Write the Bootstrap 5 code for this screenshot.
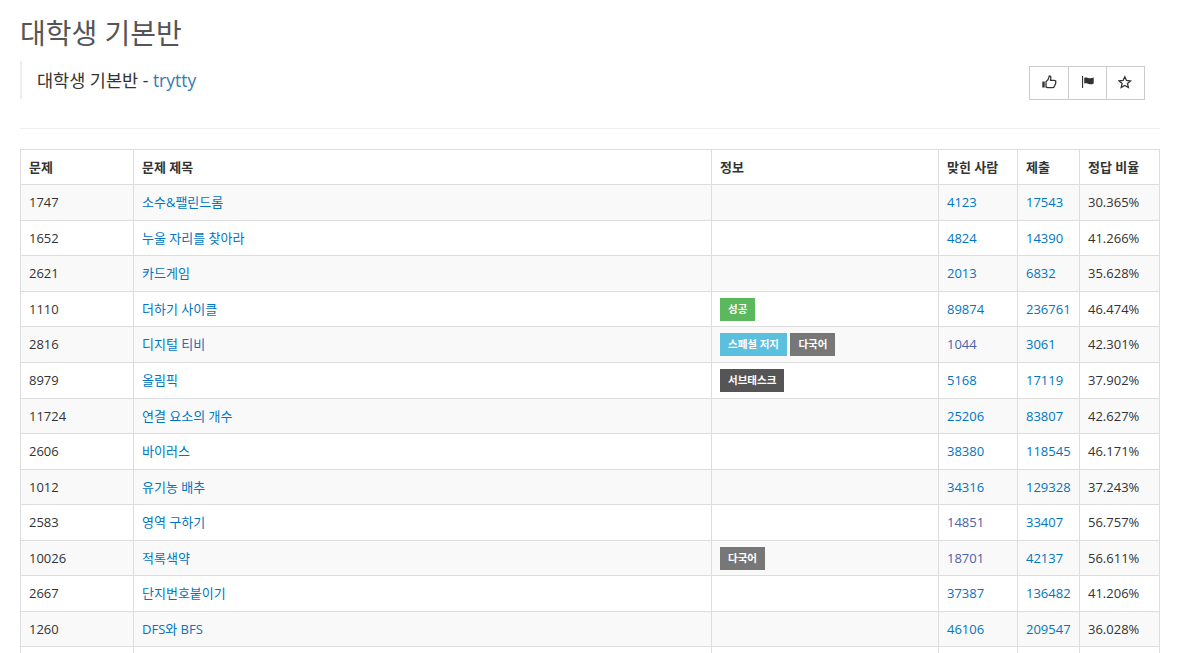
<!DOCTYPE html>
<html lang="ko">
<head>
<meta charset="utf-8">
<title>대학생 기본반</title>
<link href="https://cdn.jsdelivr.net/npm/bootstrap@5.3.0/dist/css/bootstrap.min.css" rel="stylesheet">
<style>
html,body{height:653px;overflow:hidden}
body{font-family:"Open Sans","Noto Sans CJK KR",sans-serif;font-size:13px;line-height:1.42857;color:#333;background:#fff}
a{color:#0076c0;text-decoration:none}
a.seen{color:#4a62ad}
.pagewrap{padding:0 18px 0 20px}
.headline{font-size:28px;font-weight:400;line-height:31px;color:#555;margin:18px 0 12px}
.headrow{height:68px;border-bottom:1px solid #eee;margin-bottom:19.6px}
.quoteline{border-left:2px solid #eee;height:38px;padding-left:15px;font-size:17.5px;line-height:38px;color:#333}
.quoteline a{color:#337ab7}
.actions{margin:5px 15px 0 0}
.actions .btn{width:39px;height:34px;padding:0;border:1px solid #ccc;border-radius:0;background:#fff;color:#333;display:flex;align-items:center;justify-content:center;margin-left:-1px}
.actions .btn:first-child{width:40px;margin-left:0}
.probs{table-layout:fixed;width:1139px;margin:0;--bs-table-striped-bg:#f9f9f9;--bs-table-striped-color:#333;--bs-table-color:#333;border-color:#ddd}
.probs th,.probs td{padding:8px;height:35.57px;font-size:13px;line-height:18.57px;vertical-align:top;border-color:#ddd;white-space:nowrap}
.probs thead th{font-weight:700;color:#333;border-bottom-width:1px}
.probs>:not(caption)>*>*{border-width:1px}
.probs>tbody{border-top:0}
.w1{width:113px}.w2{width:578px}.w3{width:227px}.w4{width:79px}.w5{width:62px}.w6{width:80px}
.tag{display:inline-block;font-size:10.5px;font-weight:700;line-height:13px;color:#fff;padding:5px 8px;vertical-align:top;margin:-2px 0 -3px}
.tag-ok{background:#5cb85c}.tag-spec{background:#5bc0de}.tag-lang{background:#777}.tag-sub{background:#555}
</style>
</head>
<body>
<div class="pagewrap">
  <h1 class="headline">대학생 기본반</h1>
  <div class="headrow d-flex justify-content-between align-items-start">
    <div class="quoteline">대학생 기본반 - <a href="#">trytty</a></div>
    <div class="actions d-flex">
      <a class="btn" href="#" aria-label="추천"><svg width="15" height="16" viewBox="0 0 15 16"><path fill="#333" d="M.3 6.500h2.400v6H.3z"/><path fill="none" stroke="#333" stroke-width="1.300" stroke-linejoin="round" d="M4 6.800C5.500 5.800 6.800 3.800 7.300 1c1.200-.2 1.800 1 1.500 2.300L8.400 5.400h3.800c1.600 0 2 1.300 1.400 2.200.3.900 0 1.600-.6 2 .1.900-.3 1.500-.9 1.800 0 .8-.6 1.300-1.400 1.300H6.800c-1.200 0-1.900-.5-2.800-.7z"/></svg></a>
      <a class="btn" href="#" aria-label="신고"><svg width="12" height="16" viewBox="0 0 12 16"><path fill="#333" d="M0 1h1.100v12H0z"/><path fill="#333" d="M2.200 2.800c2.500-.9 4.200.7 6 .5 1.200-.1 2.400-.4 3.500-.9v6c-1.200.7-2.500 1-3.800.8-2-.3-3.500-1.500-5.700-.6z"/></svg></a>
      <a class="btn" href="#" aria-label="즐겨찾기"><svg width="16" height="16" viewBox="0 0 16 16"><path fill="none" stroke="#333" stroke-width="1.300" d="M6.800 1.800l1.700 3.700 4 .4-3 2.700.9 3.900-3.600-2.100-3.600 2.100.9-3.900-3-2.700 4-.4z"/></svg></a>
    </div>
  </div>
  <table class="table table-bordered table-striped probs">
    <colgroup><col class="w1"><col class="w2"><col class="w3"><col class="w4"><col class="w5"><col class="w6"></colgroup>
    <thead><tr><th>문제</th><th>문제 제목</th><th>정보</th><th>맞힌 사람</th><th>제출</th><th>정답 비율</th></tr></thead>
    <tbody>
      <tr><td>1747</td><td><a href="#">소수&amp;팰린드롬</a></td><td></td><td><a href="#">4123</a></td><td><a href="#">17543</a></td><td>30.365%</td></tr>
      <tr><td>1652</td><td><a href="#">누울 자리를 찾아라</a></td><td></td><td><a href="#">4824</a></td><td><a href="#">14390</a></td><td>41.266%</td></tr>
      <tr><td>2621</td><td><a href="#">카드게임</a></td><td></td><td><a href="#">2013</a></td><td><a href="#">6832</a></td><td>35.628%</td></tr>
      <tr><td>1110</td><td><a href="#">더하기 사이클</a></td><td><span class="tag tag-ok">성공</span></td><td><a href="#">89874</a></td><td><a href="#">236761</a></td><td>46.474%</td></tr>
      <tr><td>2816</td><td><a href="#">디지털 티비</a></td><td><span class="tag tag-spec">스페셜 저지</span> <span class="tag tag-lang">다국어</span></td><td><a class="seen" href="#">1044</a></td><td><a href="#">3061</a></td><td>42.301%</td></tr>
      <tr><td>8979</td><td><a href="#">올림픽</a></td><td><span class="tag tag-sub">서브태스크</span></td><td><a href="#">5168</a></td><td><a href="#">17119</a></td><td>37.902%</td></tr>
      <tr><td>11724</td><td><a href="#">연결 요소의 개수</a></td><td></td><td><a href="#">25206</a></td><td><a href="#">83807</a></td><td>42.627%</td></tr>
      <tr><td>2606</td><td><a href="#">바이러스</a></td><td></td><td><a href="#">38380</a></td><td><a href="#">118545</a></td><td>46.171%</td></tr>
      <tr><td>1012</td><td><a href="#">유기농 배추</a></td><td></td><td><a href="#">34316</a></td><td><a href="#">129328</a></td><td>37.243%</td></tr>
      <tr><td>2583</td><td><a href="#">영역 구하기</a></td><td></td><td><a class="seen" href="#">14851</a></td><td><a href="#">33407</a></td><td>56.757%</td></tr>
      <tr><td>10026</td><td><a href="#">적록색약</a></td><td><span class="tag tag-lang">다국어</span></td><td><a class="seen" href="#">18701</a></td><td><a href="#">42137</a></td><td>56.611%</td></tr>
      <tr><td>2667</td><td><a href="#">단지번호붙이기</a></td><td></td><td><a href="#">37387</a></td><td><a href="#">136482</a></td><td>41.206%</td></tr>
      <tr><td>1260</td><td><a href="#">DFS와 BFS</a></td><td></td><td><a href="#">46106</a></td><td><a href="#">209547</a></td><td>36.028%</td></tr>
      <tr><td>&nbsp;</td><td></td><td></td><td></td><td></td><td></td></tr>
    </tbody>
  </table>
</div>
<script src="https://cdn.jsdelivr.net/npm/bootstrap@5.3.0/dist/js/bootstrap.bundle.min.js"></script>
</body>
</html>
